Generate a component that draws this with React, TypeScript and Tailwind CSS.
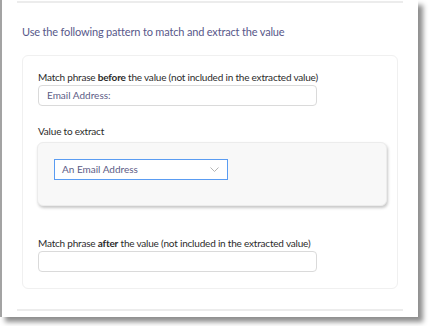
const FieldLabel = ({ before, bold, after }: { before: string; bold?: string; after?: string }) => (
  <p className="whitespace-nowrap text-[10px] leading-[13px] tracking-[-0.2px] text-[#2b2b2b]">
    {before}
    {bold && <span className="font-bold">{bold}</span>}
    {after}
  </p>
);

const App = () => {
  return (
    <div className="w-[429px] h-[326px] bg-white font-['Lato',sans-serif]">
      <div className="w-[418px] h-[317px] bg-white border-l-2 border-[#a3a3a3] shadow-[5px_5px_5px_rgba(0,0,0,0.45)] px-[15px] flex flex-col">
        <div className="h-[2px] mt-[1px] bg-[#ececec]" />
        <h2 className="mt-[21px] ml-[5px] whitespace-nowrap text-[11px] leading-[16px] tracking-[-0.17px] text-[#58588a]">
          Use the following pattern to match and extract the value
        </h2>
        <div className="mt-[15px] mx-[5px] h-[234px] rounded-[6px] border border-[#f0f0f0] px-[15px] pt-[15px]">
          <FieldLabel before="Match phrase " bold="before" after=" the value (not included in the extracted value)" />
          <div className="mt-[1px] w-[279px] h-[21px] rounded-[4px] border border-[#dadada] px-[8px] flex items-center text-[10px] text-[#5c5c86]">
            Email Address:
          </div>
          <p className="mt-[19px] text-[10px] leading-[13px] tracking-[-0.2px] text-[#2b2b2b]">Value to extract</p>
          <div className="mt-[4px] -ml-px w-[350px] h-[64px] rounded-[6px] bg-[#f8f8f8] border border-[#ececec] shadow-[1px_2px_3px_rgba(0,0,0,0.22)] px-[16px] pt-[16px]">
            <div className="w-[174px] h-[21px] bg-white border-[1.5px] border-[#5a9cf2] flex items-center justify-between pl-[7px] pr-[8px] text-[10px] text-[#5c5c86]">
              <span>An Email Address</span>
              <svg width="9" height="6" viewBox="0 0 9 6" fill="none" stroke="#b4b4b4" strokeWidth="1">
                <path d="M0.5 0.5 L4.5 4.5 L8.5 0.5" />
              </svg>
            </div>
          </div>
          <div className="mt-[31px]">
            <FieldLabel before="Match phrase " bold="after" after=" the value (not included in the extracted value)" />
          </div>
          <div className="mt-[1px] w-[279px] h-[21px] rounded-[4px] border border-[#dadada]" />
        </div>
        <div className="h-[2px] mt-[20px] bg-[#ececec]" />
      </div>
    </div>
  );
};

export default App;
